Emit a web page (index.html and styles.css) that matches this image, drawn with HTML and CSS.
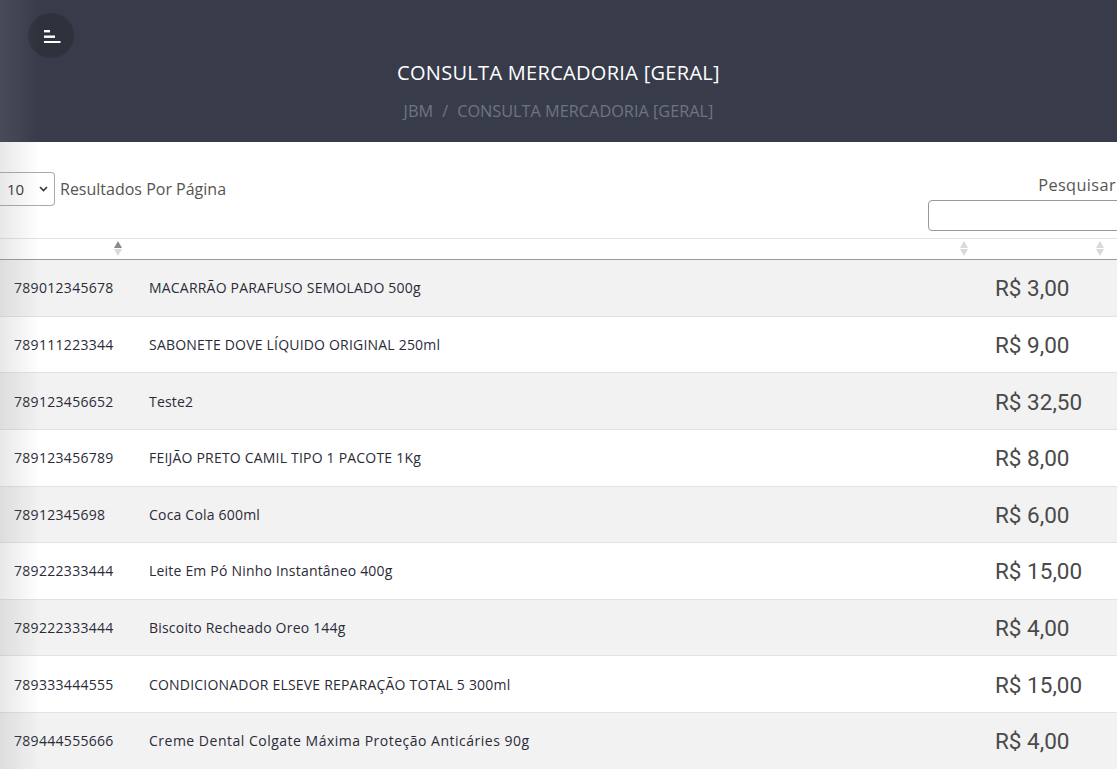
FILE: index.html
```html
<!DOCTYPE html>
<html lang="pt-BR">
<head>
<meta charset="utf-8">
<title>Consulta Mercadoria [Geral]</title>
<link rel="stylesheet" href="styles.css">
</head>
<body>
<div class="edge-shadow"></div>
<header class="page-header">
  <button class="menu-btn" aria-label="Menu">
    <svg width="18" height="14" viewBox="0 0 18 14">
      <rect x="1" y="1" width="6" height="2.4" fill="#fff"/>
      <rect x="1" y="6.5" width="11" height="2.4" fill="#fff"/>
      <rect x="1" y="12" width="16.5" height="2.4" fill="#fff"/>
    </svg>
  </button>
  <h1 class="title">CONSULTA MERCADORIA [GERAL]</h1>
  <nav class="breadcrumb"><span>JBM</span><span class="sep">/</span><span>CONSULTA MERCADORIA [GERAL]</span></nav>
</header>

<main class="content">
  <div class="controls">
    <div class="length">
      <div class="select-box"><span>10</span>
        <svg width="9" height="6" viewBox="0 0 9 6"><path d="M1 1 L4.5 4.5 L8 1" fill="none" stroke="#333" stroke-width="1.6"/></svg>
      </div>
      <span class="length-label">Resultados Por Página</span>
    </div>
    <div class="search">
      <label class="search-label">Pesquisar</label>
      <div class="search-input"></div>
    </div>
  </div>

  <div class="grid-table">
    <div class="thead">
      <div class="th"><span class="sort"><i class="up active"></i><i class="down"></i></span></div>
      <div class="th"><span class="sort"><i class="up"></i><i class="down"></i></span></div>
      <div class="th"><span class="sort"><i class="up"></i><i class="down"></i></span></div>
    </div>
    <div class="row odd"><div class="code">789012345678</div><div class="desc">MACARRÃO PARAFUSO SEMOLADO 500g</div><div class="price">R$ 3,00</div></div>
    <div class="row"><div class="code">789111223344</div><div class="desc">SABONETE DOVE LÍQUIDO ORIGINAL 250ml</div><div class="price">R$ 9,00</div></div>
    <div class="row odd"><div class="code">789123456652</div><div class="desc">Teste2</div><div class="price">R$ 32,50</div></div>
    <div class="row"><div class="code">789123456789</div><div class="desc">FEIJÃO PRETO CAMIL TIPO 1 PACOTE 1Kg</div><div class="price">R$ 8,00</div></div>
    <div class="row odd"><div class="code">78912345698</div><div class="desc">Coca Cola 600ml</div><div class="price">R$ 6,00</div></div>
    <div class="row"><div class="code">789222333444</div><div class="desc">Leite Em Pó Ninho Instantâneo 400g</div><div class="price">R$ 15,00</div></div>
    <div class="row odd"><div class="code">789222333444</div><div class="desc">Biscoito Recheado Oreo 144g</div><div class="price">R$ 4,00</div></div>
    <div class="row"><div class="code">789333444555</div><div class="desc">CONDICIONADOR ELSEVE REPARAÇÃO TOTAL 5 300ml</div><div class="price">R$ 15,00</div></div>
    <div class="row odd"><div class="code">789444555666</div><div class="desc mixed">Creme Dental Colgate Máxima Proteção Anticáries 90g</div><div class="price">R$ 4,00</div></div>
  </div>
</main>
</body>
</html>
```

FILE: styles.css
```css
* { box-sizing: border-box; }
html, body { margin: 0; padding: 0; }
body {
  font-family: "Open Sans", "Liberation Sans", sans-serif;
  background: #fff;
  color: #333;
  overflow: hidden;
  width: 1117px;
  height: 769px;
}
.edge-shadow {
  position: fixed;
  left: 0; top: 0;
  width: 40px; height: 100%;
  background: linear-gradient(to right, rgba(140,140,145,0.2), rgba(140,140,145,0));
  pointer-events: none;
  z-index: 10;
}
.page-header {
  height: 142px;
  background: #383c4a;
  display: flex;
  flex-direction: column;
  align-items: center;
  padding-top: 13px;
}
.menu-btn {
  align-self: flex-start;
  margin-left: 28px;
  width: 46px; height: 45px;
  border-radius: 50%;
  border: 0;
  background: #2e323d;
  display: flex;
  align-items: center;
  justify-content: center;
  padding: 0 0 0 2px;
}
.title {
  margin: 1px 0 0 0;
  font-weight: 400;
  font-size: 20px;
  line-height: 28px;
  color: #fff;
  letter-spacing: 0.3px;
}
.breadcrumb {
  margin-top: 13px;
  font-size: 16.3px;
  line-height: 22px;
  color: #6f7480;
  display: flex;
  gap: 9px;
}
.content { padding: 0; }
.controls {
  display: flex;
  justify-content: space-between;
  align-items: flex-start;
  padding-top: 30px;
  height: 96px;
}
.length { display: flex; align-items: center; gap: 5px; }
.select-box {
  width: 55px; height: 34px;
  border: 1px solid #aaa;
  border-left: 0;
  border-radius: 0 4px 4px 0;
  display: flex;
  align-items: center;
  justify-content: space-between;
  padding: 0 6px 0 7px;
  font-size: 15px;
  color: #333;
}
.length-label { font-size: 16px; color: #555; }
.search { display: flex; flex-direction: column; width: 189px; padding-top: 3px; }
.search-label { font-size: 16.3px; color: #555; line-height: 20px; text-align: right; padding-right: 1px; letter-spacing: 0.4px; }
.search-input {
  margin-top: 5px;
  width: 203px; height: 31px;
  border: 1px solid #999;
  border-radius: 4px;
  background: #fff;
}
.grid-table { width: 1117px; }
.thead, .row {
  display: grid;
  grid-template-columns: 135px 846px 136px;
}
.thead {
  height: 22px;
  border-top: 1px solid #e4e4e4;
  border-bottom: 1px solid #9a9a9a;
}
.th { position: relative; }
.sort {
  position: absolute;
  right: 13px; top: 2px;
  display: flex; flex-direction: column; gap: 1px;
}
.sort i {
  display: block;
  width: 0; height: 0;
  border-left: 4px solid transparent;
  border-right: 4px solid transparent;
}
.sort .up { border-bottom: 7px solid #dadada; }
.sort .down { border-top: 7px solid #dadada; }
.sort .up.active { border-bottom-color: #8a8a8a; }
.row {
  height: 56.625px;
  border-bottom: 1px solid #e2e2e2;
  align-items: center;
  background: #fff;
}
.row.odd { background: #f2f2f2; }
.code, .desc { font-size: 14px; color: #2b2b38; padding-left: 14px; white-space: nowrap; letter-spacing: 0.2px; }
.code { letter-spacing: 0.3px; }
.desc.mixed { letter-spacing: 0.5px; }
.price {
  font-family: Roboto, "Liberation Sans", sans-serif;
  font-size: 22.5px;
  color: #4a4a4a;
  padding-left: 14px;
  padding-top: 1px;
  white-space: nowrap;
  font-weight: 400;
}
```
